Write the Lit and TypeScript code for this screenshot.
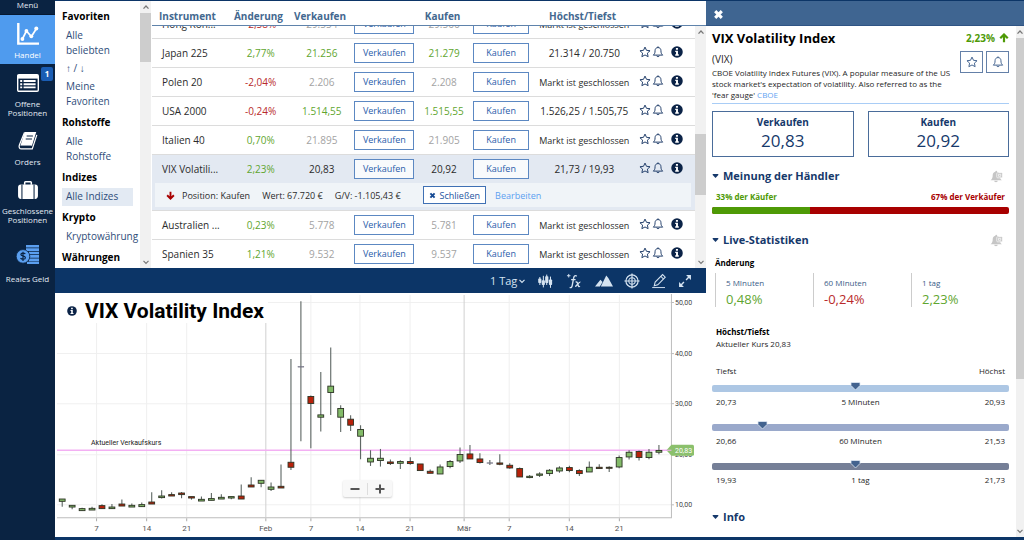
import { LitElement, html, svg, css, nothing } from "lit";
import { customElement, property } from "lit/decorators.js";
import { classMap } from "lit/directives/class-map.js";

const ICONS: Record<string, [string, unknown]> = {
  star: ["0 0 20 20", svg`<path d="M10 1.8l2.5 5.4 5.9.7-4.4 4 1.2 5.9L10 14.9l-5.2 2.9L6 11.9l-4.4-4 5.9-.7z" fill="none" stroke="currentColor" stroke-width="1.6" stroke-linejoin="round"/>`],
  bell: ["0 0 20 20", svg`<path d="M10 2.6c-3.2 0-4.9 2.3-4.9 5.2 0 4-.9 5.6-3 7.4h15.8c-2.1-1.8-3-3.4-3-7.4 0-2.9-1.7-5.2-4.9-5.2z" fill="none" stroke="currentColor" stroke-width="1.6" stroke-linejoin="round"/><path d="M10 .6v2M7.8 16.2a2.3 2.3 0 0 0 4.400 0" fill="none" stroke="currentColor" stroke-width="1.6"/>`],
  info: ["0 0 20 20", svg`<circle cx="10" cy="10" r="9.6" fill="currentColor"/><path d="M8.2 3.4h3.4v2.9H8.2zM7 7.9h4.6v6h1.4v2.3H7v-2.3h1.4v-3.7H7z" fill="#fff"/>`],
  close: ["0 0 20 20", svg`<path d="M4 4l12 12M16 4L4 16" stroke="currentColor" stroke-width="5.6"/>`],
  up: ["0 0 20 20", svg`<path d="M10 18.5V4M2.5 10.5L10 3l7.5 7.5" fill="none" stroke="currentColor" stroke-width="4.4"/>`],
  down: ["0 0 20 20", svg`<path d="M10 1.5V16M2.5 9.5L10 17l7.5-7.5" fill="none" stroke="currentColor" stroke-width="4.2"/>`],
  caret: ["0 0 8 6", svg`<path d="M.8.8h6.4v1L4 5.2.8 1.8z" fill="currentColor"/>`],
  chevUp: ["0 0 8 8", svg`<path d="M1.5 5.6L4 3l2.5 2.6" fill="none" stroke="currentColor" stroke-width="1.3"/>`],
  chevDown: ["0 0 8 8", svg`<path d="M1.5 2.8L4 5.4l2.500-2.600" fill="none" stroke="currentColor" stroke-width="1.2"/>`],
  bellOff: ["0 0 24 24", svg`<path d="M11.500 1.500c1 0 1.600.7 1.600 1.700 3.200.7 4.900 3.100 4.900 6.300 0 4.600 1.400 7.200 4 9.500H1c2.600-2.300 4-4.900 4-9.500 0-3.200 1.700-5.600 4.900-6.300 0-1 .6-1.700 1.600-1.700z" fill="currentColor"/><path d="M7.500 20h7c-.4 3.300-6.600 3.300-7 0z" fill="currentColor"/><rect x="12.500" y="5" width="10.500" height="9.500" rx="1.500" fill="currentColor" stroke="#fff" stroke-width="1.200"/><path d="M15.600 8h4.300v3.600h-4.300z" fill="none" stroke="#fff" stroke-width="1.300"/>`],
  chart: ["0 0 22 22", svg`<path d="M1.300 0v20.600H22" fill="none" stroke="currentColor" stroke-width="2.400"/><path d="M5.400 16l4-8 5 5.500L19.500 5.500" fill="none" stroke="currentColor" stroke-width="1.700"/><g fill="currentColor"><circle cx="5.400" cy="16" r="1.900"/><circle cx="9.400" cy="8" r="1.900"/><circle cx="14.300" cy="13.300" r="1.900"/><circle cx="19.300" cy="5.600" r="2"/></g>`],
  list: ["0 0 22 18", svg`<rect x=".7" y=".7" width="20.600" height="16.600" rx="1.200" fill="none" stroke="currentColor" stroke-width="1.400"/><rect x="1" y="1" width="20" height="3.600" fill="currentColor"/><path d="M3.200 7h2M3.200 10.200h2M3.200 13.400h2M6.600 7h12M6.600 10.200h12M6.600 13.400h12" stroke="currentColor" stroke-width="1.900"/>`],
  book: ["0 0 20 19", svg`<path d="M6.500 0h12.200l-4.500 14.500H2z" fill="currentColor"/><path d="M6.300.6L1 13.500c-1 2.300 0 4.400 2 4.400h11.500L19.300 3" fill="none" stroke="currentColor" stroke-width="1.300"/><path d="M8.600 4.200h6.600M7.600 7.400h6.600" stroke="#0a2342" stroke-width="1.200"/><path d="M2.200 15h11.400" stroke="#0a2342" stroke-width=".9"/>`],
  case: ["0 0 22 19", svg`<path d="M7.500 4V1.600c0-.5.300-.8.800-.8h5.400c.5 0 .8.300.8.800V4" fill="none" stroke="currentColor" stroke-width="1.600"/><path d="M3.500 3.600h15c2 0 3 1.200 3 3v9c0 2-1 3.400-3 3.400h-15c-2 0-3-1.400-3-3.400v-9c0-1.800 1-3 3-3z" fill="currentColor"/><path d="M4.600 3.600V19M17.400 3.600V19" stroke="#0a2342" stroke-width="1.100"/>`],
  coins: ["0 0 24 19", svg`<path d="M10 1.200h13M10 4.600h13M13 8h10M14 11.400h9M13 14.800h10M11 18h12" stroke="#5b9ff0" stroke-width="2.700"/><circle cx="7" cy="11.400" r="6.800" fill="#5b9ff0" stroke="#0a2342" stroke-width=".8"/><path d="M9.300 9c-.8-1.100-4.400-1.300-4.400.5 0 1.900 4.500 1 4.500 3.200 0 2-3.900 1.900-4.900.5M7 6.800v9.300" fill="none" stroke="#0a2342" stroke-width="1.200"/>`],
  candles: ["0 0 20 20", svg`<g fill="currentColor"><rect x="2.900" y="5" width="1.300" height="10"/><rect x="1.500" y="7" width="4" height="5.500" rx="1"/><rect x="7.300" y="3.500" width="1.300" height="14.500"/><rect x="5.900" y="9" width="4" height="6" rx="1"/><rect x="11.500" y="2" width="1.300" height="13"/><rect x="10.200" y="4" width="4" height="8.500" rx="1"/><rect x="16.200" y="4.500" width="1.300" height="14"/><rect x="14.900" y="8" width="4" height="7" rx="1"/></g>`],
  fx: ["0 0 20 20", svg`<g fill="none" stroke="currentColor" stroke-width="1.700"><path d="M13.500 4c-2.600-1.600-3.600 0-4 2.500L7.800 15.500C7.400 18 6.300 18.800 4.600 18M6.400 8.200h5.600M12 11.500c2-1 2.200.5 2.800 2.600s.9 3.600 2.700 2.500M18 11.400c-2-.6-5 5.600-6.600 5.400"/><path d="M1.200 3.400h4.400M3.400 1.200v4.400" stroke-width="1.200"/></g>`],
  area: ["0 0 20 20", svg`<path d="M0 16L6 8.500l2.400 2.600L5.400 16zM6.500 16L12.500 4l2.300 2.800L20 16z" fill="currentColor"/>`],
  target: ["0 0 20 20", svg`<g fill="none" stroke="currentColor"><circle cx="10" cy="10" r="7.600" stroke-width="1.500"/><circle cx="10" cy="10" r="4" stroke-width="1.300"/><path d="M10 .5v19M.5 10h19" stroke-width="1.500"/></g>`],
  pencil: ["0 0 20 20", svg`<g fill="none" stroke="currentColor" stroke-width="1.300"><path d="M4 16l1.200-4.600L14.500 2l3.300 3.300-9.300 9.400z"/><path d="M12.300 4.200l3.300 3.300"/></g><path d="M1.500 18.200h16" stroke="currentColor" stroke-width="1.200"/>`],
  expand: ["0 0 20 20", svg`<path d="M11.500 1.500h7v7zM1.500 11.500v7h7z" fill="currentColor"/><path d="M17 3l-5.500 5.500M3 17l5.500-5.500" stroke="currentColor" stroke-width="2"/>`],
};

const icon = (name: string, cls = "") =>
  html`<svg class="icon ${cls}" viewBox=${ICONS[name][0]} aria-hidden="true">${ICONS[name][1]}</svg>`;

const base = css`
  :host { font-family: "Open Sans", "Noto Sans", sans-serif; box-sizing: border-box; }
  *, *::before, *::after { box-sizing: border-box; }
  h1, h2, h3, p, ul, dl, dd { margin: 0; padding: 0; }
  ul { list-style: none; }
  a { color: inherit; text-decoration: none; }
  button, select { font: inherit; color: inherit; background: none; border: 0; padding: 0; margin: 0; cursor: pointer; }
  .icon { display: block; flex: none; }
`;

@customElement("scroll-track")
class ScrollTrack extends LitElement {
  @property({ type: Number }) start = 0;
  @property({ type: Number }) size = 50;
  static styles = [base, css`
    :host { display: grid; grid-template-rows: 12px minmax(0, 1fr) 12px; background: #f1f1f1; color: #777; justify-items: center; align-items: center; }
    .rail { display: flex; flex-direction: column; width: 100%; height: 100%; }
    .thumb { width: 100%; background: #cdcdcd; }
    .icon { width: 8px; height: 8px; }
  `];
  render() {
    return html`${icon("chevUp")}
      <div class="rail">
        <div style="flex: 0 0 ${this.start}%"></div>
        <div class="thumb" style="flex: 0 0 ${this.size}%"></div>
      </div>
      ${icon("chevDown")}`;
  }
}

@customElement("side-nav")
class SideNav extends LitElement {
  static styles = [base, css`
    :host { display: block; background: #0a2342; color: #e3eaf2; font-size: 8px; line-height: 9px; text-align: center; overflow: hidden; }
    .menu { display: block; height: 15px; width: 100%; padding-bottom: 5px; border-bottom: 1px solid #061830; }
    .item { display: block; position: relative; padding-top: 12px; }
    .item.active { background: #4f9bee; color: #fff; padding: 7px 0 5px; }
    .item.next { padding-top: 7px; }
    .item.money { padding-top: 18px; }
    .pic { display: flex; height: 24px; align-items: center; justify-content: center; color: #fff; margin-bottom: 4px; }
    .money .pic { margin-bottom: 8px; }
    .icon { width: 22px; height: 22px; }
    .list, .book, .case { height: 18px; }
    .coins { width: 24px; height: 19px; }
    .badge { position: absolute; right: 2px; top: 3px; width: 12px; height: 14px; line-height: 14px; border-radius: 2px; background: #1a5db4; color: #fff; font-weight: 700; }
  `];
  render() {
    const items: [string, string, string, string?][] = [
      ["active", "chart", "Handel"], ["next", "list", "Offene Positionen", "1"], ["", "book", "Orders"],
      ["", "case", "Geschlossene Positionen"], ["money", "coins", "Reales Geld"],
    ];
    return html`<button class="menu">Menü</button>
      <nav>${items.map(([c, i, t, b]) => html`<a class="item ${c}" href="#${i}">
        <span class="pic">${icon(i, i)}</span>${b ? html`<span class="badge">${b}</span>` : nothing}${t}</a>`)}</nav>`;
  }
}

@customElement("category-list")
class CategoryList extends LitElement {
  static styles = [base, css`
    :host { display: grid; grid-template-columns: minmax(0, 1fr) 11px; background: #fff; font-size: 10px; line-height: 15px; overflow: hidden; }
    .list { padding: 4px 0 0 7px; overflow: hidden; }
    h2 { font-size: 10px; line-height: 22px; color: #000; }
    .link { display: block; width: 71px; padding: 1px 8px 2px 4px; color: #2f4d7a; }
    .link.on { background: #e3eaf3; }
  `];
  render() {
    const groups: [string, string[]][] = [
      ["Favoriten", ["Alle beliebten", "↑ / ↓", "Meine Favoriten"]], ["Rohstoffe", ["Alle Rohstoffe"]],
      ["Indizes", ["Alle Indizes"]], ["Krypto", ["Kryptowährung"]], ["Währungen", []],
    ];
    return html`<nav class="list">${groups.map(([g, l]) => html`<h2>${g}</h2>
        ${l.map((t) => html`<a class=${classMap({ link: true, on: t === "Alle Indizes" })} href="#">${t}</a>`)}`)}
      </nav><scroll-track .start=${0} .size=${20}></scroll-track>`;
  }
}

type Row = [string, string, string, string, string, boolean];
const CLOSED = "Markt ist geschlossen";
const ROWS: Row[] = [
  ["Hong Kon...", "-2,58%", "29.554", "29.566", CLOSED, false],
  ["Japan 225", "2,77%", "21.256", "21.279", "21.314 / 20.750", true],
  ["Polen 20", "-2,04%", "2.206", "2.208", CLOSED, false],
  ["USA 2000", "-0,24%", "1.514,55", "1.515,55", "1.526,25 / 1.505,75", true],
  ["Italien 40", "0,70%", "21.895", "21.905", CLOSED, false],
  ["VIX Volatili...", "2,23%", "20,83", "20,92", "21,73 / 19,93", true],
  ["Australien ...", "0,23%", "5.778", "5.781", CLOSED, false],
  ["Spanien 35", "1,21%", "9.532", "9.537", CLOSED, false],
];

@customElement("instrument-table")
class InstrumentTable extends LitElement {
  static styles = [base, css`
    :host { display: grid; grid-template: 25px minmax(0, 1fr) / minmax(0, 1fr) 11px; background: #fff; color: #2b2b2b; font-size: 10px; overflow: hidden; }
    table { display: contents; }
    thead { display: block; grid-area: 1 / 1 / 2 / 3; padding-right: 11px; border-bottom: 1px solid #5f83ab; }
    tbody { display: block; grid-area: 2 / 1; overflow: hidden; }
    scroll-track { grid-area: 2 / 2; }
    tr { display: grid; grid-template-columns: 75fr 67fr 55fr 70fr 49fr 65fr 101fr 60fr; align-items: center; }
    tbody tr { height: 29px; border-bottom: 1px solid #dcdcdc; }
    th { color: #43688f; font-weight: 700; text-align: center; white-space: nowrap; padding: 4px 4px 0 0; line-height: 22px; justify-self: center; }
    th:first-child { justify-self: start; padding-left: 7px; }
    td { padding: 0; text-align: center; white-space: nowrap; }
    td.name { text-align: left; padding-left: 10px; }
    td.icons { display: flex; align-items: center; gap: 1px; padding: 0 0 2px 4px; color: #1c3a66; }
    td.closed { font-size: 9px; }
    .pos { color: #5fa630; } .neg { color: #b92b2b; } .off { color: #a3a3a3; }
    .deal { width: 60px; height: 20px; border: 1px solid #5c88c2; background: #fff; color: #2a5caa; font-size: 9px; line-height: 18px; }
    .deal.buy { width: 56px; }
    .icons button { display: flex; }
    .icons .icon { width: 12px; height: 12px; }
    .icons .about { margin-left: 6px; color: #0b2347; }
    tbody tr.sel { background: #e3e9f2; border-bottom: 0; height: 28px; }
    .sel .deal { background: #f8fafc; }
    tbody tr.open { display: block; height: 28px; background: #e3e9f2; padding: 0 4px 3px 3px; }
    .open td { display: flex; align-items: center; height: 24px; padding-left: 11px; background: #f0f4f8; font-size: 9px; }
    .open .icon { width: 9px; height: 9px; margin-right: 7px; color: #a80000; }
    .open span { margin-right: 12px; }
    .open .shut { display: flex; align-items: center; height: 18px; margin: 0 9px 0 10px; padding: 0 5px; border: 1px solid #3f70b4; background: #fff; color: #2454a0; }
    .open .shut .icon { width: 7px; height: 7px; margin-right: 4px; color: #164a94; }
    .open a { color: #5c9ff0; }
  `];
  firstUpdated() {
    this.renderRoot.querySelector("tbody")!.scrollTop = 16;
  }
  row([n, c, s, b, h, live]: Row) {
    const sel = n.startsWith("VIX");
    const tone = sel ? "" : live ? "pos" : "off";
    return html`<tr class=${sel ? "sel" : ""}>
        <td class="name">${n}</td><td class=${c[0] === "-" ? "neg" : "pos"}>${c}</td><td class=${tone}>${s}</td>
        <td><button class="deal">Verkaufen</button></td><td class=${tone}>${b}</td>
        <td><button class="deal buy">Kaufen</button></td><td class=${h === CLOSED ? "closed" : ""}>${h}</td>
        <td class="icons"><button aria-label="Favorit">${icon("star")}</button><button aria-label="Alarm">${icon("bell")}</button><button class="about" aria-label="Info">${icon("info")}</button></td>
      </tr>
      ${sel ? html`<tr class="open"><td colspan="8">${icon("down")}<span>Position: Kaufen</span><span>Wert: 67.720 €</span><span>G/V: -1.105,43 €</span>
          <button class="shut">${icon("close")}Schließen</button><a href="#">Bearbeiten</a></td></tr>` : nothing}`;
  }
  render() {
    const head = ["Instrument", "Änderung", "Verkaufen", "", "Kaufen", "", "Höchst/Tiefst", ""];
    return html`<table>
        <thead><tr>${head.map((h) => html`<th>${h}</th>`)}</tr></thead>
        <tbody>${ROWS.map((r) => this.row(r))}</tbody>
      </table><scroll-track .start=${44} .size=${28}></scroll-track>`;
  }
}

/* direction, high, body top, body bottom, low; one entry per trading day */
const CANDLES: [string, number, number, number, number][] = [
  ["g", 498.7, 498.7, 501, 506.3], ["g", 505, 505, 506.7, 509], ["g", 507.3, 508.3, 510.3, 510.3], ["g", 506.3, 508, 509.7, 509.7],
  ["r", 504, 505.3, 508.3, 508.3], ["g", 503.7, 506.7, 508.3, 508.3], ["r", 499.3, 503.7, 505.7, 505.7], ["g", 503.3, 505, 506.7, 506.7],
  ["g", 502.3, 504.3, 506.3, 506.3], ["r", 492, 501.7, 503.7, 503.7], ["g", 490, 495.7, 497.3, 498.3], ["r", 492, 494.3, 495.7, 495.7],
  ["r", 491.7, 492.7, 494.3, 498], ["r", 496.3, 496.3, 497.7, 499.3], ["g", 496.3, 499, 500.7, 500.7], ["g", 492.7, 498.3, 500, 500],
  ["g", 494, 497, 498.7, 498.7], ["g", 496.3, 496.3, 497.7, 499], ["r", 484.3, 495.7, 498.7, 498.7], ["r", 477, 484.7, 486.7, 486.7],
  ["g", 480, 480, 483, 487], ["g", 482.3, 486.7, 489, 490.7], ["r", 464.3, 486, 487.7, 487.7], ["r", 359, 462, 467, 469.7],
  ["d", 301.3, 366.5, 367, 441], ["r", 395.3, 396.3, 403.3, 448], ["g", 372, 414.7, 417, 431.3], ["g", 347.3, 386, 392.3, 414.7],
  ["g", 405, 408.3, 417, 431.7], ["r", 415, 419, 425, 430.7], ["g", 425, 429.3, 436, 459], ["g", 450, 458, 461.7, 465.7],
  ["g", 448.7, 458, 460.3, 466.3], ["r", 459.3, 461.7, 463.3, 464.7], ["g", 460, 461.3, 463, 468.7], ["r", 457, 461.3, 463.3, 464.5],
  ["r", 463.7, 463.7, 470.3, 470.3], ["r", 469.3, 471, 473, 473], ["g", 464.3, 466.7, 473.7, 473.7], ["g", 459.7, 461.3, 466.3, 468],
  ["g", 447.3, 454.3, 460.7, 462.7], ["r", 444.7, 453.7, 458.7, 458.7], ["r", 453, 458.7, 462.3, 463.3], ["d", 459.7, 462.5, 463, 464.7],
  ["r", 454, 462.7, 464, 465], ["r", 463, 465, 467.7, 468.5], ["r", 467.3, 468.3, 476.7, 476.7], ["g", 474.7, 476, 477.3, 478],
  ["g", 472, 473.7, 475, 476.7], ["g", 468.7, 470, 473.3, 475.7], ["g", 466, 467.7, 470.7, 472.5], ["r", 465.5, 467.3, 470.3, 472],
  ["r", 469, 470.3, 473.3, 475.7], ["g", 461.3, 467, 471.7, 471.7], ["r", 464, 467, 468.3, 468.3], ["r", 466, 467, 468, 471.7],
  ["g", 455.3, 457.3, 466.7, 468], ["g", 450, 452, 456.7, 459.3], ["r", 450.3, 451.3, 457.3, 460.3], ["g", 448.7, 452, 457.3, 459],
  ["g", 444.7, 450.3, 452, 454],
];
const FILL: Record<string, string> = { g: "#83bb69", r: "#b8210a", d: "#667" };

@customElement("price-chart")
class PriceChart extends LitElement {
  static styles = [base, css`
    :host { display: block; position: relative; background: #fff; overflow: hidden; font-family: Roboto, sans-serif; min-height: 0; }
    .plot { display: block; width: 100%; height: 100%; font-family: Roboto, sans-serif; }
    .x { font-size: 8px; fill: #555; text-anchor: middle; }
    .y { font-size: 7px; fill: #444; }
    .note { font-size: 7px; fill: #222; }
    .tag { font-size: 7px; fill: #fff; }
    .title { position: absolute; left: 0; top: 0; display: flex; align-items: center; gap: 8px; height: 30px; padding: 5px 4px 0 12px; background: #fff; }
    .title .icon { width: 10px; height: 10px; color: #0b2347; }
    h1 { font-size: 21px; line-height: 24px; font-weight: 700; color: #000; }
    .zoom { position: absolute; left: 288px; bottom: 40px; display: flex; height: 17px; width: 49px; align-items: center; border-radius: 2px; background: #f8f8f8; box-shadow: 0 1px 2px rgba(0, 0, 0, 0.2); }
    .zoom button { flex: 1; height: 12px; display: flex; align-items: center; justify-content: center; }
    .zoom button + button { border-left: 1px solid #ddd; }
    .zoom .icon { width: 10px; height: 10px; }
  `];
  render() {
    const xs: [number, string][] = [[96.5, "7"], [146.5, "14"], [186.5, "21"], [265.5, "Feb"], [310.5, "7"], [359.5, "14"], [409.5, "21"], [463.5, "Mär"], [508.5, "7"], [568.5, "14"], [618.5, "21"]];
    const ys: [number, string][] = [[302.5, "50,00"], [353.5, "40,00"], [403.5, "30,00"], [454.5, "20,00"], [504.5, "10,00"]];
    return html`<svg class="plot" viewBox="55 293 650 244" preserveAspectRatio="xMinYMin meet" role="img" aria-label="VIX Volatility Index">
        ${ys.map(([y, t]) => svg`<path d="M57 ${y}H670" stroke="#f0f0f0"/><path d="M670 ${y}h3" stroke="#bbb"/><text class="y" x="674" y=${y + 2.5}>${t}</text>`)}
        ${xs.map(([x, t]) => svg`<path d="M${x} 295V517" stroke=${t.length > 2 ? "#d0d0d0" : "#efefef"}/><path d="M${x} 518v3" stroke="#aaa"/><text class="x" x=${x} y="531">${t}</text>`)}
        <path d="M57 517.5H670.5V294" fill="none" stroke="#bdbdbd"/>
        <path d="M57 450H668" stroke="#f3b0f3" stroke-width="1.4"/>
        ${CANDLES.map(([k, hi, a, b, lo], i) => {
          const x = 62.2 + i * 9.93;
          return svg`<path d="M${x} ${hi}V${lo}" stroke="#5d6663" stroke-width="1.1"/><rect x=${x - 2.9} y=${a} width="5.8" height=${b - a} fill=${FILL[k]} stroke=${k === "d" ? "#778" : "#2c3324"} stroke-width=${k === "d" ? 0.5 : 0.9}/>`;
        })}
        <text class="note" x="91" y="445">Aktueller Verkaufskurs</text>
        <path d="M665.5 450l5-5.500h21q1.500 0 1.500 1.500v8q0 1.500-1.500 1.500h-21z" fill="#8bc06c"/>
        <path d="M665.5 450h5" stroke="#f3b0f3"/>
        <text class="tag" x="674" y="452.5">20,83</text>
      </svg>
      <div class="title">${icon("info")}<h1>VIX Volatility Index</h1></div>
      <div class="zoom">
        <button aria-label="Verkleinern"><svg class="icon" viewBox="0 0 10 10"><path d="M.5 5h9" stroke="#555" stroke-width="2"/></svg></button>
        <button aria-label="Vergrößern"><svg class="icon" viewBox="0 0 10 10"><path d="M.5 5h9M5 .5v9" stroke="#555" stroke-width="2"/></svg></button>
      </div>`;
  }
}

@customElement("chart-toolbar")
class ChartToolbar extends LitElement {
  static styles = [base, css`
    :host { display: flex; align-items: center; justify-content: flex-end; gap: 11px; padding: 0 14px 0 12px; background: #0c3567; color: #d5e3f1; }
    .range { display: flex; align-items: center; font-size: 11px; }
    select { appearance: none; outline: 0; }
    .range .icon { width: 8px; height: 8px; }
    button { display: flex; }
    .candles, .fx { margin-right: 2px; }
    .candles, .fx, .target, .pencil { width: 16px; height: 16px; }
    .area { width: 18px; height: 18px; }
    .expand { width: 14px; height: 14px; }
  `];
  render() {
    return html`<label class="range"><select aria-label="Zeitraum"><option>1 Tag</option></select>${icon("chevDown")}</label>
      ${["candles", "fx", "area", "target", "pencil", "expand"].map((n) => html`<button aria-label=${n}>${icon(n, n)}</button>`)}`;
  }
}

@customElement("detail-panel")
class DetailPanel extends LitElement {
  static styles = [base, css`
    :host { display: grid; grid-template: 25px minmax(0, 1fr) / minmax(0, 1fr) 8px; background: #fff; overflow: hidden; color: #262626; font-size: 8px; line-height: 12px; }
    .bar { grid-area: 1 / 1 / 2 / 3; display: flex; align-items: center; padding: 3px 7px 0; background: #3f6591; border-bottom: 1px solid #2f5484; color: #fff; }
    .bar button { display: flex; }
    .bar .icon { width: 11px; height: 11px; }
    .body { padding: 3px 7px 0 6px; overflow: hidden; }
    .top { display: flex; justify-content: space-between; align-items: center; height: 18px; color: #000; }
    h1 { font-size: 13px; line-height: 18px; }
    .rise { display: flex; align-items: center; gap: 4px; font-size: 10px; font-weight: 700; color: #4e9a06; }
    .rise .icon { width: 10px; height: 10px; }
    .intro { display: flex; justify-content: space-between; padding: 4px 0 3px; border-bottom: 1px solid #a9cdf6; }
    .code { font-size: 10px; line-height: 14px; margin: 1px 0; }
    .about { line-height: 11px; max-width: 242px; }
    .about a { color: #62a4f2; }
    .tools { display: flex; gap: 3px; }
    .tools button { width: 23px; height: 22px; display: flex; align-items: center; justify-content: center; border: 1px solid #6480a8; color: #3f5f8c; }
    .tools .icon { width: 12px; height: 12px; }
    .deals { display: grid; grid-template-columns: 1fr 1fr; gap: 14px; margin-top: 7px; }
    .deals button { height: 46px; border: 1px solid #4a6c9a; color: #16396b; font-size: 10px; font-weight: 700; line-height: 14px; padding-bottom: 1px; }
    .deals b { display: block; font-size: 17px; line-height: 24px; font-weight: 400; }
    .sec { display: flex; align-items: center; height: 16px; margin-top: 18px; color: #16396b; }
    .sec.one { margin-top: 11px; }
    .sec.last { margin-top: 23px; }
    .sec h2 { flex: 1; font-size: 11px; line-height: 16px; margin-left: 4px; }
    .sec .caret { width: 7px; height: 6px; }
    .sec .bellOff { width: 13px; height: 13px; color: #c6c6c6; margin-right: 6px; }
    .pair { display: flex; justify-content: space-between; padding: 0 4px; font-weight: 700; margin-top: 7px; }
    .g { color: #4e9a06; } .r { color: #a80000; }
    .mood { display: flex; height: 7px; margin-top: 4px; border-radius: 2px; overflow: hidden; background: #a80000; }
    .mood div { background: #4e9a06; }
    h3 { font-size: 8px; line-height: 12px; color: #000; }
    h3.chg { margin: 9px 0 4px 3px; }
    .stats { display: grid; grid-template-columns: repeat(3, 1fr); margin: 0 0 19px 3px; }
    .stats div { height: 34px; border-left: 1px solid #ccc; padding-left: 10px; color: #3c5c88; padding-top: 4px; }
    .stats dd { font-size: 13px; line-height: 20px; }
    .stats .up { color: #5fa630; } .stats .dn { color: #b92b2b; }
    .hl { padding-left: 4px; }
    .ends { display: flex; justify-content: space-between; padding: 0 4px; margin: 15px 0 8px; }
    .track { position: relative; height: 7px; border-radius: 2px; }
    .track svg { position: absolute; top: -3px; width: 11px; height: 9px; margin-left: -5px; }
    .vals { display: grid; grid-template-columns: 1fr 1fr 1fr; padding: 0 4px; margin: 4px 0 16px; }
    .vals.fin { margin-bottom: 0; }
    .vals :nth-child(2) { text-align: center; }
    .vals :nth-child(3) { text-align: right; }
    .light { background: #adc7e4; } .mid { background: #9aa9cb; } .dark { background: #757f97; }
  `];
  head(t: string, cls = "") {
    return html`<div class="sec ${cls}">${icon("caret", "caret")}<h2>${t}</h2>${cls === "last" ? nothing : icon("bellOff", "bellOff")}</div>`;
  }
  render() {
    const stats = [["5 MInuten", "0,48%", "up"], ["60 MInuten", "-0,24%", "dn"], ["1 tag", "2,23%", "up"]];
    const tracks: [string, number, string, string, string][] = [
      ["light", 48.3, "20,73", "5 MInuten", "20,93"], ["mid", 16.7, "20,66", "60 MInuten", "21,53"], ["dark", 48.3, "19,93", "1 tag", "21,73"],
    ];
    return html`<div class="bar"><button aria-label="Schließen">${icon("close")}</button></div>
      <div class="body">
        <div class="top"><h1>VIX Volatility Index</h1><span class="rise">2,23% ${icon("up")}</span></div>
        <div class="intro">
          <div><p class="code">(VIX)</p><p class="about">CBOE Volatility Index Futures (VIX). A popular measure of the US stock market's expectation of volatility. Also referred to as the 'fear gauge' <a href="#">CBOE</a></p></div>
          <div class="tools"><button aria-label="Favorit">${icon("star")}</button><button aria-label="Alarm">${icon("bell")}</button></div>
        </div>
        <div class="deals"><button>Verkaufen<b>20,83</b></button><button>Kaufen<b>20,92</b></button></div>
        ${this.head("Meinung der Händler", "one")}
        <div class="pair"><span class="g">33% der Käufer</span><span class="r">67% der Verkäufer</span></div>
        <div class="mood"><div style="width: 33%"></div></div>
        ${this.head("Live-Statistiken")}
        <h3 class="chg">Änderung</h3>
        <dl class="stats">${stats.map(([l, v, c]) => html`<div><dt>${l}</dt><dd class=${c}>${v}</dd></div>`)}</dl>
        <div class="hl"><h3>Höchst/Tiefst</h3><p>Aktueller Kurs 20,83</p></div>
        <div class="ends"><span>Tiefst</span><span>Höchst</span></div>
        ${tracks.map(([c, p, a, m, z], i) => html`<div class="track ${c}"><svg viewBox="0 0 11 9" style="left: ${p}%"><path d="M1 .5h9v3L5.500 8 1 3.500z" fill="#43638f" stroke="#dfe8f2" stroke-width=".8"/></svg></div>
          <div class="vals ${i === 2 ? "fin" : ""}"><span>${a}</span><span>${m}</span><span>${z}</span></div>`)}
        ${this.head("Info", "last")}
      </div>
      <scroll-track .start=${0} .size=${70}></scroll-track>`;
  }
}

@customElement("app-root")
class AppRoot extends LitElement {
  static styles = [base, css`
    :host { display: grid; grid-template-columns: 55px minmax(0, 1fr) 318px; height: 100vh; background: #0c3567; overflow: hidden; }
    .main { display: grid; grid-template-rows: 267px 25px minmax(0, 1fr); padding: 1px 0 3px; min-width: 0; }
    .market { display: grid; grid-template-columns: 96px minmax(0, 1fr); column-gap: 1px; background: #fff; min-height: 0; }
    detail-panel { margin: 1px 0 3px; }
  `];
  render() {
    return html`<side-nav></side-nav>
      <main class="main">
        <div class="market"><category-list></category-list><instrument-table></instrument-table></div>
        <chart-toolbar></chart-toolbar>
        <price-chart></price-chart>
      </main>
      <detail-panel></detail-panel>`;
  }
}
